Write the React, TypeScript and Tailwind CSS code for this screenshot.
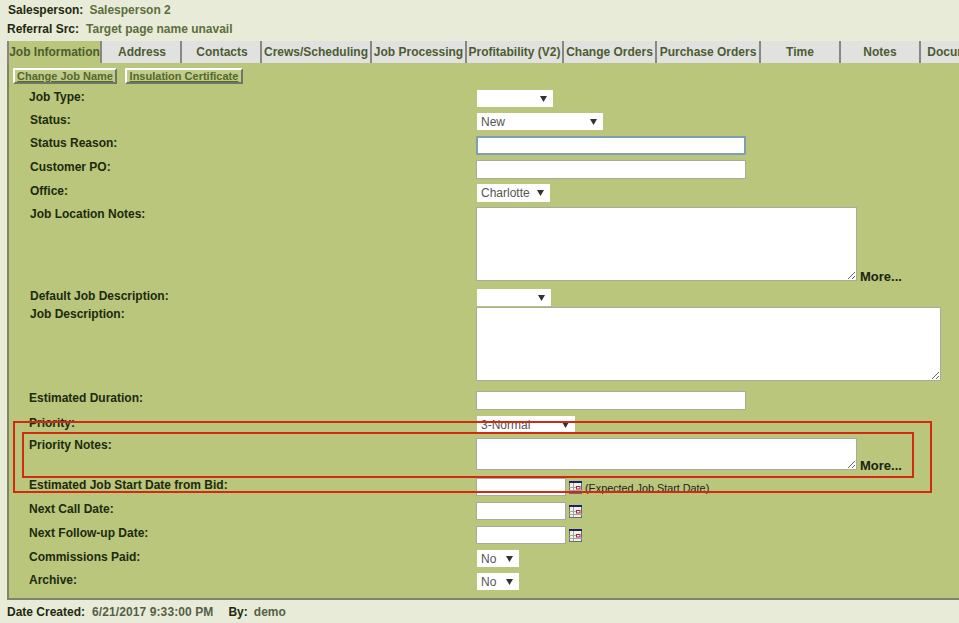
import React from "react"

const TABS = [
  { label: "Job Information", w: "w-[95px]", active: true },
  { label: "Address", w: "w-[80px] pl-[2px]" },
  { label: "Contacts", w: "w-[80px] pl-[2px]" },
  { label: "Crews/Scheduling", w: "w-[110px]" },
  { label: "Job Processing", w: "w-[95px]" },
  { label: "Profitability (V2)", w: "w-[97px]" },
  { label: "Change Orders", w: "w-[93px]" },
  { label: "Purchase Orders", w: "w-[104px]" },
  { label: "Time", w: "w-[80px]" },
  { label: "Notes", w: "w-[80px]" },
  { label: "Documents", w: "w-[80px]" },
]

function Row({ label, className, labelClass, children }: { label: string; className: string; labelClass?: string; children: React.ReactNode }) {
  return (
    <div className={`flex ${className}`}>
      <div className={`w-[467px] shrink-0 text-[12px] leading-[14px] font-bold text-[#1d2a0e] ${labelClass ?? "pl-[20px]"}`}>{label}</div>
      <div className="flex items-start">{children}</div>
    </div>
  )
}

function FakeSelect({ value, w, h = "h-[17px]", pl = "pl-[4px]" }: { value?: string; w: string; h?: string; pl?: string }) {
  return (
    <div className={`ml-[1px] flex items-center justify-between bg-white pr-[6px] text-[12px] text-[#555] ${pl} ${w} ${h}`}>
      <span>{value}</span>
      <svg width="7" height="6" viewBox="0 0 7 6"><path d="M0 0h7L3.5 6z" fill="#333" /></svg>
    </div>
  )
}

function TextInput({ w, h = "h-[19px]", focused }: { w: string; h?: string; focused?: boolean }) {
  return (
    <input
      className={`block bg-white outline-none ${w} ${h} ${focused ? "border-2 border-[#7f9fb0] rounded-[1px]" : "border border-[#a8ab9c]"}`}
    />
  )
}

function NoteArea({ w, h }: { w: string; h: string }) {
  return <textarea className={`block bg-white outline-none border border-[#a8ab9c] resize ${w} ${h}`} />
}

function More() {
  return <span className="ml-[3px] self-end text-[13px] leading-[13px] font-bold text-[#1a2410] translate-y-[2px]">More...</span>
}

function CalendarIcon() {
  return (
    <svg className="ml-[3px] mt-[3px]" width="13" height="13" viewBox="0 0 13 13">
      <rect x="0.5" y="0.5" width="12" height="12" fill="#f1efe6" stroke="#6a6a78" />
      <rect x="0" y="0" width="13" height="2" fill="#1c1f6b" />
      <path d="M4.5 2v10M0 6.5h7M0 9.5h13" stroke="#a5a59e" />
      <rect x="7.5" y="5.5" width="3.5" height="2.5" fill="#fff" stroke="#9c2740" />
    </svg>
  )
}

export default function App() {
  return (
    <div className="relative h-[623px] w-[959px] overflow-hidden bg-[#e8ebd8] font-['Liberation_Sans',Arial,sans-serif]">
      {/* Header */}
      <div className="pl-[8px] pt-[3px] text-[12px] leading-[14px] font-bold">
        <span className="text-[#1d2a0e]">Salesperson:</span>
        <span className="ml-[6px] text-[#5c6e3c]">Salesperson 2</span>
      </div>
      <div className="mt-[5px] pl-[7px] text-[12px] leading-[14px] font-bold">
        <span className="text-[#1d2a0e]">Referral Src:</span>
        <span className="ml-[7px] text-[#5c6e3c]">Target page name unavail</span>
      </div>

      {/* Tabs */}
      <div className="mt-[5px] ml-[7px] flex h-[22px] w-[1000px]">
        {TABS.map((t) => (
          <div
            key={t.label}
            className={`${t.w} shrink-0 flex items-center justify-center whitespace-nowrap overflow-hidden border-r-2 border-[#868886] text-[12px] font-bold text-[#4c5c30] ${t.active ? "bg-[#b9c67c] border-l-2" : "bg-[#e1e2e0]"}`}
          >
            {t.label}
          </div>
        ))}
      </div>

      {/* Panel */}
      <div className="ml-[7px] h-[537px] border-l-2 border-b-2 border-[#7d8468] bg-[#b9c67c]">
        <div className="flex gap-[8px] pl-[4px] pt-[5px]">
          <button className="h-[16px] w-[104px] border-2 border-t-white border-l-white border-r-[#6f7668] border-b-[#6f7668] bg-[#c0cc8a] text-[11px] leading-[12px] font-bold text-[#54682c] underline">Change Job Name</button>
          <button className="h-[16px] w-[118px] border-2 border-t-white border-l-white border-r-[#6f7668] border-b-[#6f7668] bg-[#c0cc8a] text-[11px] leading-[12px] font-bold text-[#54682c] underline">Insulation Certificate</button>
        </div>

        <Row label="Job Type:" className="mt-[6px]"><FakeSelect w="w-[76px]" /></Row>
        <Row label="Status:" className="mt-[6px]" labelClass="pl-[21px]"><FakeSelect value="New" w="w-[126px]" /></Row>
        <Row label="Status Reason:" className="mt-[6px]" labelClass="pl-[21px]"><TextInput w="w-[270px]" focused /></Row>
        <Row label="Customer PO:" className="mt-[5px]" labelClass="pl-[21px]"><TextInput w="w-[270px]" /></Row>
        <Row label="Office:" className="mt-[5px]" labelClass="pl-[21px]"><FakeSelect value="Charlotte" w="w-[73px]" h="h-[18px]" /></Row>
        <Row label="Job Location Notes:" className="mt-[5px]" labelClass="pl-[21px]">
          <NoteArea w="w-[381px]" h="h-[74px]" />
          <More />
        </Row>
        <Row label="Default Job Description:" className="mt-[8px] h-[18px]" labelClass="pl-[21px]"><FakeSelect w="w-[74px]" /></Row>
        <Row label="Job Description:" className="" labelClass="pl-[21px]"><NoteArea w="w-[465px]" h="h-[74px]" /></Row>
        <Row label="Estimated Duration:" className="mt-[10px]"><TextInput w="w-[270px]" /></Row>
        <Row label="Priority:" className="mt-[6px]"><FakeSelect value="3-Normal" w="w-[98px]" /></Row>
        <Row label="Priority Notes:" className="mt-[5px]">
          <NoteArea w="w-[381px]" h="h-[32px]" />
          <More />
        </Row>
        <Row label="Estimated Job Start Date from Bid:" className="mt-[8px]">
          <TextInput w="w-[90px]" h="h-[18px]" />
          <CalendarIcon />
          <span className="ml-[3px] mt-[3px] text-[10.8px] leading-[14px] text-[#222]">(Expected Job Start Date)</span>
        </Row>
        <Row label="Next Call Date:" className="mt-[6px]">
          <TextInput w="w-[90px]" h="h-[18px]" />
          <CalendarIcon />
        </Row>
        <Row label="Next Follow-up Date:" className="mt-[6px]">
          <TextInput w="w-[90px]" h="h-[18px]" />
          <CalendarIcon />
        </Row>
        <Row label="Commissions Paid:" className="mt-[6px]"><FakeSelect value="No" w="w-[42px]" /></Row>
        <Row label="Archive:" className="mt-[6px]"><FakeSelect value="No" w="w-[42px]" /></Row>
      </div>

      {/* Footer */}
      <div className="flex h-[23px] items-center pl-[7px] text-[12px] font-bold">
        <span className="text-[#1d2a0e]">Date Created:</span>
        <span className="ml-[7px] tracking-[0.1px] text-[#555f48]">6/21/2017 9:33:00 PM</span>
        <span className="ml-[15px] text-[#1d2a0e]">By:</span>
        <span className="ml-[6px] text-[#555f48]">demo</span>
      </div>

      {/* Annotation boxes drawn over the form */}
      <div className="pointer-events-none absolute left-[13px] top-[421px] h-[72px] w-[919px] border-2 border-[#d22a10]" />
      <div className="pointer-events-none absolute left-[22px] top-[432px] h-[46px] w-[892px] border-2 border-[#d22a10]" />
    </div>
  )
}
